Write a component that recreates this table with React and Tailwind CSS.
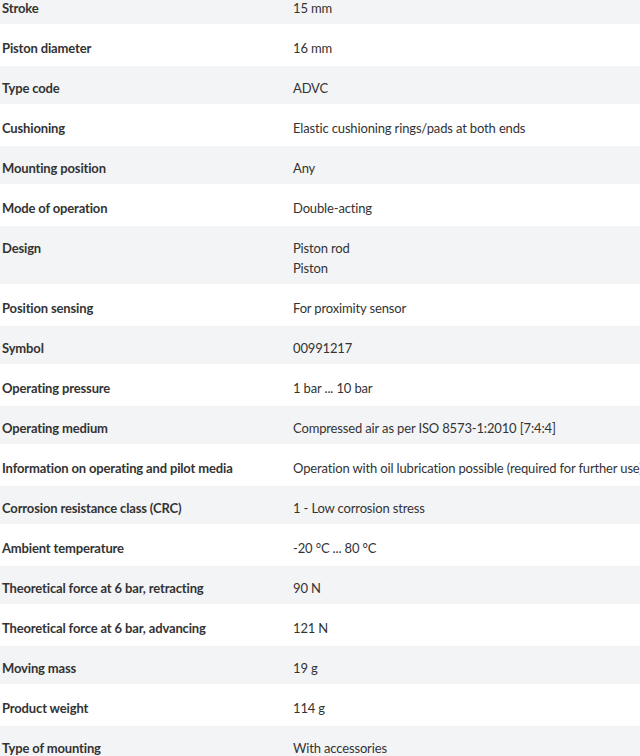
import React from "react";

const specs = [
  ["Stroke", ["15 mm"]],
  ["Piston diameter", ["16 mm"]],
  ["Type code", ["ADVC"]],
  ["Cushioning", ["Elastic cushioning rings/pads at both ends"]],
  ["Mounting position", ["Any"]],
  ["Mode of operation", ["Double-acting"]],
  ["Design", ["Piston rod", "Piston"]],
  ["Position sensing", ["For proximity sensor"]],
  ["Symbol", ["00991217"]],
  ["Operating pressure", ["1 bar ... 10 bar"]],
  ["Operating medium", ["Compressed air as per ISO 8573-1:2010 [7:4:4]"]],
  [
    "Information on operating and pilot media",
    ["Operation with oil lubrication possible (required for further use)"],
  ],
  ["Corrosion resistance class (CRC)", ["1 - Low corrosion stress"]],
  ["Ambient temperature", ["-20 °C ... 80 °C"]],
  ["Theoretical force at 6 bar, retracting", ["90 N"]],
  ["Theoretical force at 6 bar, advancing", ["121 N"]],
  ["Moving mass", ["19 g"]],
  ["Product weight", ["114 g"]],
  ["Type of mounting", ["With accessories"]],
];

export default function App() {
  return (
    <div
      className="w-[640px] h-[756px] overflow-hidden bg-white text-[#333] text-[13px] leading-[20px]"
      style={{ fontFamily: "Lato, 'Open Sans', sans-serif" }}
    >
      <div className="-mt-[16px]">
        {specs.map(([label, values], i) => (
          <div
            key={label}
            className={`flex border-t-2 border-white pt-[12px] pb-[6px] ${
              i % 2 === 0 ? "bg-[#f3f4f5]" : "bg-white"
            }`}
          >
            <div className="w-[293px] shrink-0 pl-[2px] font-bold tracking-[-0.15px]">
              {label}
            </div>
            <div className="flex-1 whitespace-nowrap tracking-[-0.15px]">
              {values.map((v) => (
                <div key={v}>{v}</div>
              ))}
            </div>
          </div>
        ))}
      </div>
    </div>
  );
}
